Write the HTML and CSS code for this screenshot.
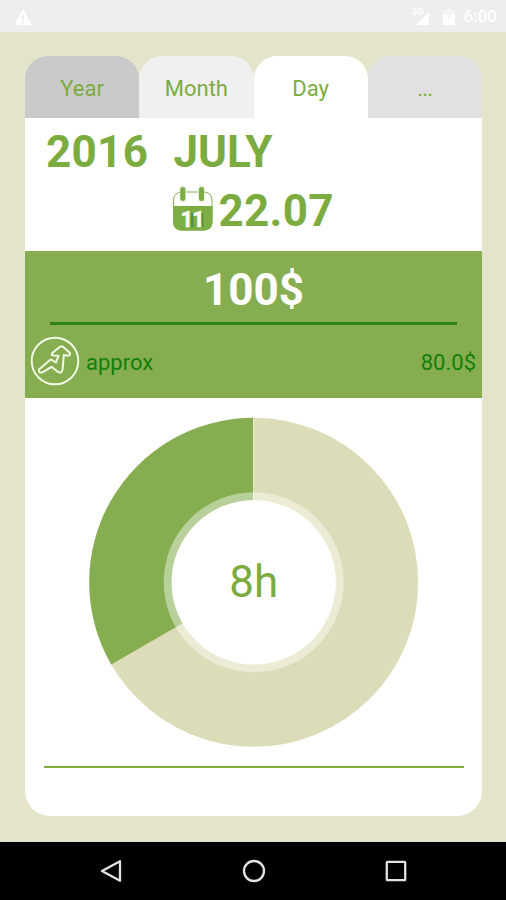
FILE: index.html
```html
<!DOCTYPE html>
<html lang="en">
<head>
<meta charset="utf-8">
<title>Day</title>
<link rel="stylesheet" href="styles.css">
</head>
<body>
<header class="status">
  <svg class="warn" viewBox="0 0 20 18"><path fill="#fff" fill-rule="evenodd" d="M10 1 19 17H1ZM9 7v5h2V7ZM9 13.4v2h2v-2Z"/></svg>
  <div class="status-right">
    <span class="net">3G</span>
    <svg class="signal" viewBox="0 0 13 13"><path fill="#fff" d="M13 0V13H0Z"/></svg>
    <svg class="battery" viewBox="0 0 12 17"><path fill="#f5f5f5" d="M3.5 0h5v2H12v6H0V2h3.5Z"/><path fill="#fff" d="M0 6h3l3 4 3-4h3v11H0Z"/></svg>
    <span class="clock">6:00</span>
  </div>
</header>
<main class="screen">
  <nav class="tabs">
    <div class="tab tab-year">Year</div>
    <div class="tab tab-month">Month</div>
    <div class="tab tab-day">Day</div>
    <div class="tab tab-more">...</div>
  </nav>
  <section class="card">
    <div class="dates">
      <div class="row-top"><span class="year">2016</span><span class="month">JULY</span></div>
      <div class="row-day">
        <svg class="calendar" viewBox="0 0 42 46">
          <rect x="1.500" y="6" width="38.500" height="38" rx="8" fill="#fff" stroke="#84ae50" stroke-width="1"/>
          <path fill="#7cae43" d="M1 20H40.500V36.500a8 8 0 0 1-8 8H9a8 8 0 0 1-8-8Z"/>
          <rect x="7.800" y="0.500" width="6" height="15" rx="3" fill="#7cae43" stroke="#fff" stroke-width=".6"/>
          <rect x="26.500" y="0.500" width="6" height="15" rx="3" fill="#7cae43" stroke="#fff" stroke-width=".6"/>
          <path fill="#4f9350" d="M19 27H21.500V41H19ZM29.500 27H31.500V41H29.500Z"/>
          <text class="cal-num" x="20" y="41">11</text>
        </svg>
        <span class="day">22.07</span>
      </div>
    </div>
    <div class="money">
      <div class="total">100$</div>
      <div class="rule"></div>
      <div class="approx">
        <svg class="trend" viewBox="0 0 50 50" fill="none" stroke="#f3fbe4" stroke-linejoin="round">
          <circle cx="25" cy="25" r="23.300" stroke-width="1.900"/>
          <path stroke-width="2" d="M9 33.500 20 24Q21 23.200 22 24L26 26.500 28.500 19.800 23.500 19.600Q20.500 19 22.500 16.800L30 10.800Q31.500 9.700 33 10.800L39.500 16.500Q41 19 38 19.700L33.800 19 32.500 34Q31.500 37.500 28.500 36.200L21.500 30.800 12.500 36.300Q8 37.500 9 33.500Z"/>
        </svg>
        <span class="label">approx</span>
        <span class="value">80.0$</span>
      </div>
    </div>
    <svg class="donut" viewBox="-164.700 -165.300 330 330">
      <circle r="164.500" fill="#dcdcb8"/>
      <path fill="#86ae51" d="M0 0V-164.500A164.500 164.500 0 0 0-142.460 82.250Z"/>
      <path fill="none" stroke="#f1f3df" stroke-width="1" d="M0-164.500V0"/>
      <circle r="90" fill="#fff" fill-opacity=".42"/>
      <circle r="82.200" fill="#fff"/>
      <text class="hours" x="0" y="15">8h</text>
    </svg>
    <div class="base-line"></div>
  </section>
</main>
<footer class="navbar">
  <svg viewBox="0 0 26 26"><path d="M22 3.200V22.800L4 13Z"/></svg>
  <svg viewBox="0 0 26 26"><circle cx="13" cy="13" r="10"/></svg>
  <svg viewBox="0 0 26 26"><rect x="3.800" y="3.800" width="18.400" height="18.400" rx=".8"/></svg>
</footer>
</body>
</html>
```
FILE: styles.css
```css
* { box-sizing: border-box; }
body {
  margin: 0;
  width: 506px;
  height: 900px;
  display: flex;
  flex-direction: column;
  overflow: hidden;
  background: #e3e4ca;
  font-family: Roboto, "Liberation Sans", sans-serif;
  color: #7cac40;
}
svg { display: block; flex: none; }
.status {
  height: 32px;
  flex: none;
  background: #eee;
  display: flex;
  justify-content: space-between;
  padding: 0 9px 0 13px;
  color: #fff;
}
.warn { width: 20px; height: 18px; margin-top: 7.500px; }
.status-right { display: flex; align-items: flex-start; }
.net { font-size: 9px; line-height: 9px; font-weight: 700; margin: 8px -8px 0 0; }
.signal { width: 13px; height: 13px; margin: 12px 14px 0 0; }
.battery { width: 12px; height: 17px; margin: 8px 9px 0 0; }
.clock { font-size: 17px; line-height: 32px; font-weight: 500; }
.screen { flex: 1; min-height: 0; padding: 24px 24px 25.500px 25px; display: flex; flex-direction: column; }
.tabs { display: grid; grid-template-columns: repeat(4, 1fr); height: 62px; flex: none; }
.tab {
  border-radius: 23px 23px 0 0;
  font-size: 22px;
  line-height: 66px;
  text-align: center;
}
.tab-year { background: #c9caca; }
.tab-month { background: #f0f0f0; }
.tab-day { background: #fff; }
.tab-more { background: #e1e1e1; letter-spacing: -.8px; }
.card { flex: 1; min-height: 0; background: #fff; border-radius: 0 0 25px 25px; display: flex; flex-direction: column; }
.dates { height: 133px; flex: none; padding: 4px 0 0 21px; font-weight: 700; font-size: 44px; }
.row-top { display: flex; height: 59px; line-height: 61px; }
.year { width: 127.500px; letter-spacing: .3px; }
.row-day { display: flex; height: 60px; line-height: 61px; padding-left: 125.500px; }
.calendar { width: 42px; height: 46px; margin-top: 5px; }
.day { margin-left: 5px; letter-spacing: .3px; }
.cal-num { font-size: 22px; font-weight: 700; text-anchor: middle; fill: #fff; stroke: #fff; stroke-width: .5px; letter-spacing: -1px; }
.money { height: 146.500px; flex: none; background: #86ae51; }
.total { height: 71px; line-height: 78px; text-align: center; font-size: 44px; font-weight: 700; color: #fff; }
.rule { height: 3px; margin: 0 25px; background: #2f8216; }
.approx { display: flex; padding: 11px 6px 0 5px; color: #138007; font-size: 22px; line-height: 54px; }
.trend { width: 50px; height: 50px; }
.label { margin-left: 6px; }
.value { margin-left: auto; }
.donut { width: 330px; height: 330px; margin: 19.700px 0 0 63.800px; }
.donut { margin-left: 64px; transform: none; }
.hours { font-size: 44px; text-anchor: middle; fill: #7cac40; }
.base-line { height: 2.500px; margin: 18.800px 18.500px 0 19px; background: #7fac3c; }
.navbar {
  height: 58.500px;
  flex: none;
  background: #000;
  display: flex;
  justify-content: center;
  gap: 116.500px;
  padding: 16px 0 0 1px;
}
.navbar svg { width: 26px; height: 26px; fill: none; stroke: #e3e3e3; stroke-width: 2.300; stroke-linejoin: round; }
```
